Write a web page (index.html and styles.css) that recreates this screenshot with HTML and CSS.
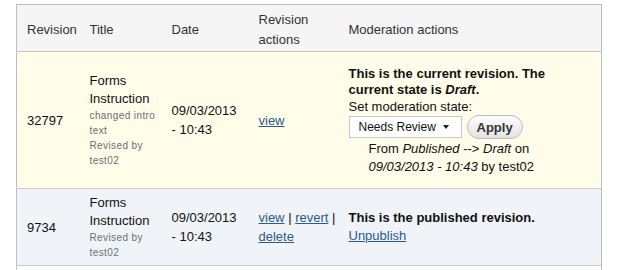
FILE: index.html
```html
<!DOCTYPE html>
<html lang="en">
<head>
    <meta charset="UTF-8">
    <title>Revisions</title>
    <link rel="stylesheet" href="styles.css">
</head>
<body>
    <div class="page">
        <table class="revisions">
            <colgroup>
                <col class="c-rev">
                <col class="c-title">
                <col class="c-date">
                <col class="c-actions">
                <col class="c-mod">
            </colgroup>
            <thead>
                <tr>
                    <th>Revision</th>
                    <th>Title</th>
                    <th>Date</th>
                    <th>Revision actions</th>
                    <th>Moderation actions</th>
                </tr>
            </thead>
            <tbody>
                <tr class="current">
                    <td>32797</td>
                    <td class="title-cell">
                        <div class="title">Forms Instruction</div>
                        <div class="meta">changed intro text</div>
                        <div class="meta">Revised by test02</div>
                    </td>
                    <td>09/03/2013 - 10:43</td>
                    <td class="actions-cell"><a href="#">view</a></td>
                    <td>
                        <div class="moderation">
                            <div class="state">This is the current revision. The current state is <em>Draft</em>.</div>
                            <form class="set-state">
                                <label for="state">Set moderation state:</label>
                                <div class="controls">
                                    <div class="select" id="state"><span>Needs Review</span><span class="arrow"></span></div>
                                    <button type="button" class="apply">Apply</button>
                                </div>
                            </form>
                            <div class="history">From <em>Published</em> --&gt; <em>Draft</em> on <em>09/03/2013 - 10:43</em> by test02</div>
                        </div>
                    </td>
                </tr>
                <tr class="published">
                    <td>9734</td>
                    <td class="title-cell">
                        <div class="title">Forms Instruction</div>
                        <div class="meta">Revised by test02</div>
                    </td>
                    <td>09/03/2013 - 10:43</td>
                    <td class="actions-cell"><a href="#">view</a> | <a href="#">revert</a> | <a href="#">delete</a></td>
                    <td>
                        <div class="state">This is the published revision.</div>
                        <a href="#">Unpublish</a>
                    </td>
                </tr>
                <tr class="next">
                    <td></td><td></td><td></td><td></td><td></td>
                </tr>
            </tbody>
        </table>
    </div>
</body>
</html>
```

FILE: styles.css
```css
body {
    margin: 0;
    font-family: "Liberation Sans", Arial, sans-serif;
    font-size: 13px;
    color: #111;
    background: #fff;
}
.page {
    padding: 4px 18px 0 16px;
}
.revisions {
    width: 100%;
    border-collapse: collapse;
    table-layout: fixed;
    border: 1px solid #bdbdbd;
}
.c-rev { width: 63px; }
.c-title { width: 82px; }
.c-date { width: 87px; }
.c-actions { width: 90px; }
th {
    background: #f5f5f5;
    color: #333;
    font-weight: normal;
    text-align: left;
    padding: 5px 4px 1px 10px;
    line-height: 20px;
    border-bottom: 1px solid #c4c4c4;
}
td {
    padding: 5px 10px;
    vertical-align: middle;
    line-height: 19px;
    border-bottom: 1px solid #c9c9c9;
}
td.title-cell {
    padding-right: 4px;
}
td.actions-cell {
    padding-right: 1px;
}
.current td {
    background: #fffcea;
}
.published td {
    background: #f0f3f8;
}
.next td {
    height: 20px;
    padding: 0;
    border-bottom: none;
}
.title {
    line-height: 18px;
}
.meta {
    font-size: 10px;
    line-height: 15px;
    color: #6f6f6f;
    letter-spacing: 0.4px;
}
a {
    color: #2a5b8c;
}
em {
    font-style: italic;
}
.moderation {
    padding: 9px 0 7px;
}
.state {
    font-weight: bold;
    line-height: 16px;
}
.set-state {
    margin: 0;
}
.set-state label {
    display: block;
    line-height: 16px;
    margin-top: 1px;
}
.controls {
    display: flex;
    align-items: center;
    gap: 5px;
}
.select {
    box-sizing: border-box;
    width: 113px;
    height: 22px;
    padding: 0 12px 0 9px;
    background: #fff;
    border: 1px solid #c8c8c8;
    font-size: 12px;
    white-space: nowrap;
    display: flex;
    align-items: center;
    justify-content: space-between;
}
.arrow {
    width: 0;
    height: 0;
    border-left: 3px solid transparent;
    border-right: 3px solid transparent;
    border-top: 4px solid #222;
}
.apply {
    height: 24px;
    padding: 0 9px;
    font-family: inherit;
    font-size: 13px;
    font-weight: bold;
    color: #333;
    border: 1px solid #bdbdbd;
    border-radius: 12px;
    background: linear-gradient(#fdfdfd, #e3e3e3);
}
.history {
    padding-left: 20px;
    margin-top: 1px;
    line-height: 18px;
}
```
